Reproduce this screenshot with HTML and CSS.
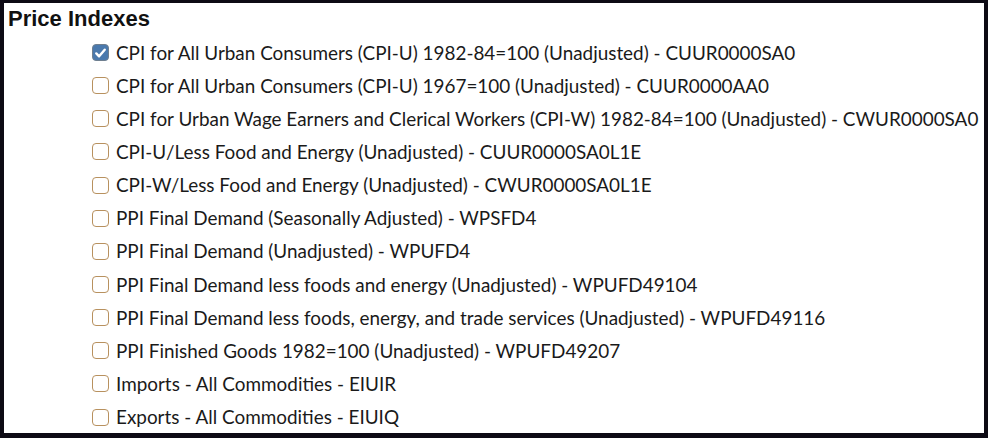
FILE: index.html
```html
<!DOCTYPE html>
<html>
<head>
<meta charset="utf-8">
<link rel="stylesheet" href="styles.css">
</head>
<body>
<div class="frame">
  <h2 class="title">Price Indexes</h2>
  <ul class="list">
    <li class="item"><span class="box checked"><svg viewBox="0 0 16 16" width="16" height="16"><path d="M3.5 8.5 L6.5 11.5 L12.5 4.5" fill="none" stroke="#fff" stroke-width="2.6" stroke-linecap="round" stroke-linejoin="round"/></svg></span><span class="label">CPI for All Urban Consumers (CPI-U) 1982-84=100 (Unadjusted) - CUUR0000SA0</span></li>
    <li class="item"><span class="box"></span><span class="label">CPI for All Urban Consumers (CPI-U) 1967=100 (Unadjusted) - CUUR0000AA0</span></li>
    <li class="item"><span class="box"></span><span class="label">CPI for Urban Wage Earners and Clerical Workers (CPI-W) 1982-84=100 (Unadjusted) - CWUR0000SA0</span></li>
    <li class="item"><span class="box"></span><span class="label">CPI-U/Less Food and Energy (Unadjusted) - CUUR0000SA0L1E</span></li>
    <li class="item"><span class="box"></span><span class="label">CPI-W/Less Food and Energy (Unadjusted) - CWUR0000SA0L1E</span></li>
    <li class="item"><span class="box"></span><span class="label">PPI Final Demand (Seasonally Adjusted) - WPSFD4</span></li>
    <li class="item"><span class="box"></span><span class="label">PPI Final Demand (Unadjusted) - WPUFD4</span></li>
    <li class="item"><span class="box"></span><span class="label">PPI Final Demand less foods and energy (Unadjusted) - WPUFD49104</span></li>
    <li class="item"><span class="box"></span><span class="label">PPI Final Demand less foods, energy, and trade services (Unadjusted) - WPUFD49116</span></li>
    <li class="item"><span class="box"></span><span class="label">PPI Finished Goods 1982=100 (Unadjusted) - WPUFD49207</span></li>
    <li class="item"><span class="box"></span><span class="label">Imports - All Commodities - EIUIR</span></li>
    <li class="item"><span class="box"></span><span class="label">Exports - All Commodities - EIUIQ</span></li>
  </ul>
</div>
</body>
</html>
```
FILE: styles.css
```css
html, body {
  margin: 0;
  padding: 0;
  background: #0d0a14;
}
.frame {
  box-sizing: border-box;
  width: 988px;
  height: 438px;
  background: #fff;
  border-style: solid;
  border-color: #0d0a14;
  border-width: 3px 4px 5px 4px;
  overflow: hidden;
}
.title {
  margin: 0;
  padding: 3px 0 0 4px;
  font-family: "Liberation Sans", Arial, sans-serif;
  font-weight: bold;
  font-size: 22px;
  line-height: 26px;
  color: #111;
}
.list {
  list-style: none;
  margin: 0;
  padding: 4px 0 0 88px;
}
.item {
  display: flex;
  align-items: center;
  height: 33.15px;
  font-family: Lato, "Open Sans", sans-serif;
  font-size: 18.9px;
  color: #1a1a1a;
  white-space: nowrap;
}
.box {
  box-sizing: border-box;
  width: 17px;
  height: 17px;
  border: 1.5px solid #b8915f;
  border-radius: 4px;
  margin-right: 7px;
  flex: none;
  display: flex;
  background: #fff;
}
.box.checked {
  background: #4a79ad;
  border-color: #6f7f8f;
}
.box svg {
  display: block;
}
.label {
  line-height: 22px;
}
```
